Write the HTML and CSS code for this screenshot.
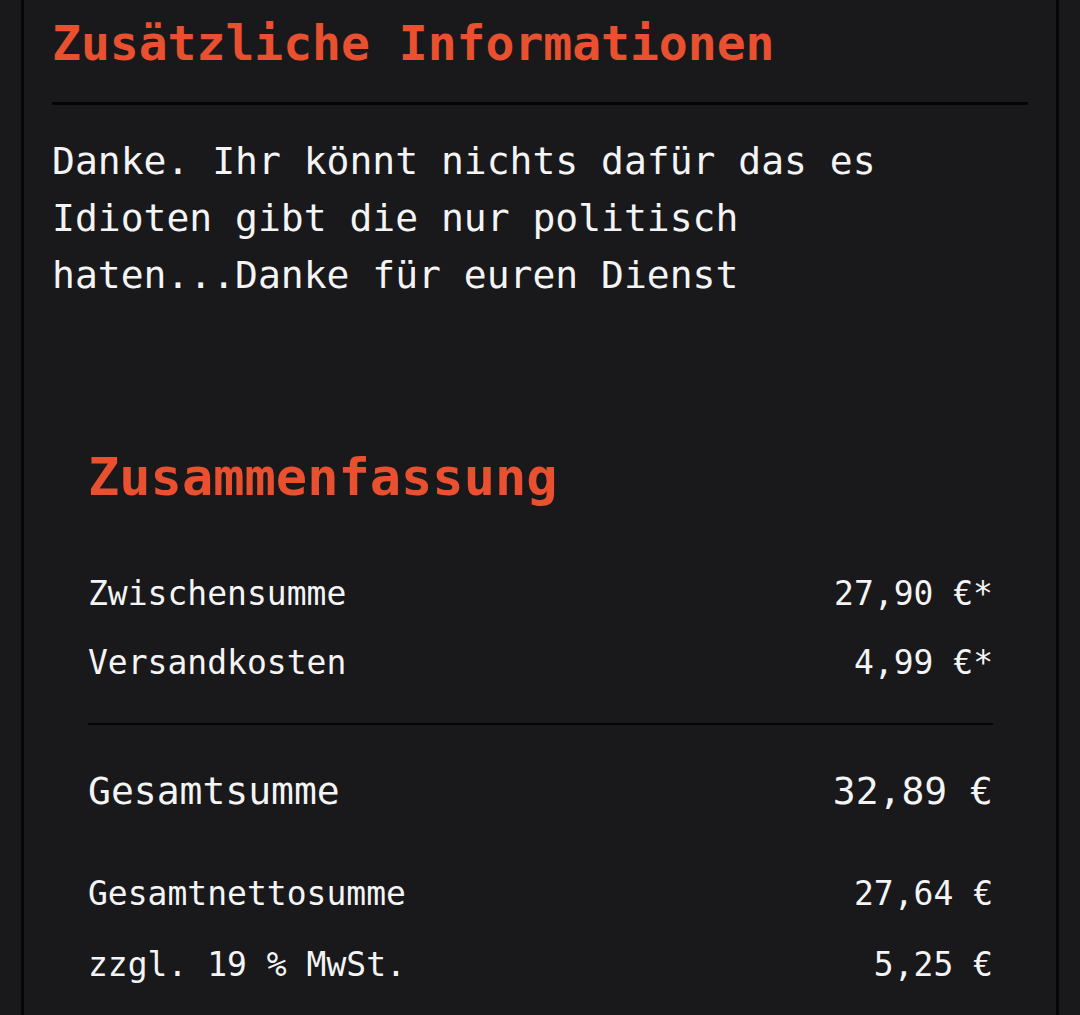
FILE: index.html
```html
<!DOCTYPE html>
<html lang="de">
<head>
  <meta charset="UTF-8" />
  <meta name="viewport" content="width=device-width, initial-scale=1.0" />
  <title>Bestellung – Zusammenfassung</title>
  <link rel="stylesheet" href="styles.css">
</head>
<body>
  <div class="panel">
    <div class="info-section">
      <h2 class="section-title">Zusätzliche Informationen</h2>
      <p class="info-text">Danke. Ihr könnt nichts dafür das es Idioten gibt die nur politisch haten...Danke für euren Dienst</p>
    </div>

    <div class="summary">
      <h3 class="summary-title">Zusammenfassung</h3>

      <div class="summary-row">
        <span>Zwischensumme</span>
        <span>27,90 €*</span>
      </div>
      <div class="summary-row">
        <span>Versandkosten</span>
        <span>4,99 €*</span>
      </div>

      <div class="summary-row total">
        <span>Gesamtsumme</span>
        <span>32,89 €</span>
      </div>

      <div class="summary-row net">
        <span>Gesamtnettosumme</span>
        <span>27,64 €</span>
      </div>
      <div class="summary-row tax">
        <span>zzgl. 19 % MwSt.</span>
        <span>5,25 €</span>
      </div>
    </div>
  </div>
</body>
</html>
```

FILE: styles.css
```css
* {
  box-sizing: border-box;
}
html, body {
  margin: 0;
  background: #19191b;
}
body {
  font-family: 'DejaVu Sans Mono', monospace;
  color: #f4f4f4;
}
.panel {
  margin-left: 21px;
  width: 1038px;
  min-height: 100vh;
  padding: 14px 28px 40px;
  border-left: 3px solid #050507;
  border-right: 3px solid #050507;
}
.section-title {
  margin: 0;
  font-size: 48px;
  line-height: 58px;
  font-weight: bold;
  color: #e9502f;
  padding-bottom: 30px;
  border-bottom: 3px solid #050507;
}
.info-text {
  margin: 28px 0 0;
  font-size: 38px;
  line-height: 57px;
}
.summary {
  margin-top: 142px;
  padding: 0 35px 0 36px;
}
.summary-title {
  margin: 0 0 61px;
  font-size: 52px;
  line-height: 62px;
  font-weight: bold;
  color: #e9502f;
}
.summary-row {
  display: flex;
  justify-content: space-between;
  font-size: 33px;
  line-height: 50px;
  margin-bottom: 19px;
}
.summary-row:nth-of-type(2) {
  margin-bottom: 0;
  padding-bottom: 35px;
  border-bottom: 2px solid #050507;
}
.summary-row.total {
  margin-top: 38px;
  margin-bottom: 49px;
  font-size: 38px;
  line-height: 57px;
}
.summary-row.net {
  margin-bottom: 21px;
}
```
